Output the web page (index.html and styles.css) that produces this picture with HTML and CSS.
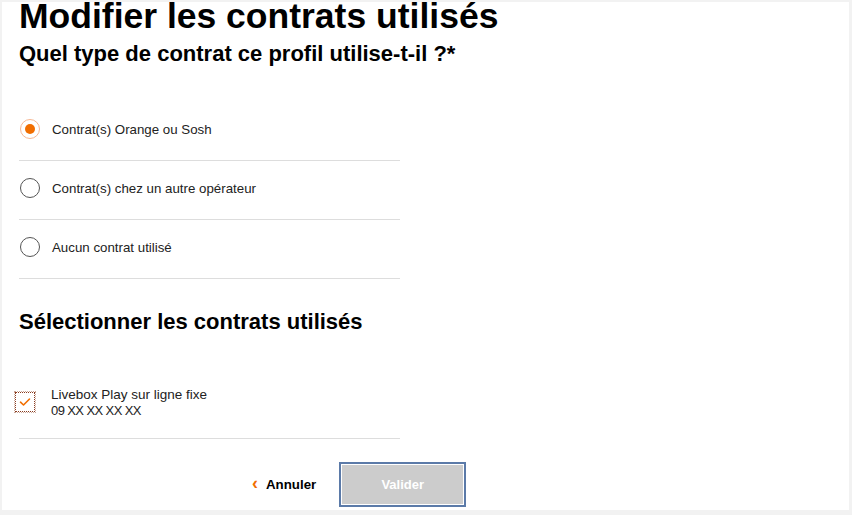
FILE: index.html
```html
<!DOCTYPE html>
<html lang="fr">
<head>
<meta charset="utf-8">
<link rel="stylesheet" href="styles.css">
</head>
<body>
<div class="panel">
  <h1 class="title">Modifier les contrats utilisés</h1>
  <h2 class="subtitle">Quel type de contrat ce profil utilise-t-il ?*</h2>
  <div class="options">
    <div class="row">
      <span class="radio checked"><span class="dot"></span></span>
      <span class="label">Contrat(s) Orange ou Sosh</span>
    </div>
    <div class="row">
      <span class="radio"></span>
      <span class="label">Contrat(s) chez un autre opérateur</span>
    </div>
    <div class="row">
      <span class="radio"></span>
      <span class="label">Aucun contrat utilisé</span>
    </div>
  </div>
  <h2 class="section">Sélectionner les contrats utilisés</h2>
  <div class="contract">
    <span class="checkbox">
      <svg width="12" height="10" viewBox="0 0 12 10"><path d="M1.5 5.2 L4.5 8 L10.5 2" fill="none" stroke="#f16e00" stroke-width="1.6" stroke-linecap="round" stroke-linejoin="round"/></svg>
    </span>
    <div class="ctext">
      <div class="cname">Livebox Play sur ligne fixe</div>
      <div class="cnum">09 XX XX XX XX</div>
    </div>
  </div>
  <div class="actions">
    <span class="cancel"><span class="chev">‹</span>Annuler</span>
    <span class="validate">Valider</span>
  </div>
</div>
</body>
</html>
```
FILE: styles.css
```css
html, body {
  margin: 0;
  padding: 0;
  background: #f2f2f2;
}
body {
  font-family: "Liberation Sans", Arial, sans-serif;
  color: #000;
  padding: 2px 3px 4px 2px;
  height: 515px;
  box-sizing: border-box;
  overflow: hidden;
}
.panel {
  background: #fff;
  height: 508px;
  padding: 0 0 0 17px;
  box-sizing: border-box;
}
.title {
  margin: 0;
  font-size: 35.5px;
  line-height: 28px;
  font-weight: bold;
}
.subtitle {
  margin: 12px 0 0;
  font-size: 22px;
  line-height: 24px;
  font-weight: bold;
}
.options {
  margin-top: 36px;
  width: 381px;
}
.row {
  display: flex;
  align-items: center;
  height: 58px;
  padding-bottom: 4px;
  box-sizing: border-box;
  height: 59px;
  border-bottom: 1px solid #ddd;
}
.radio {
  width: 18px;
  height: 18px;
  border: 1.5px solid #555;
  border-radius: 50%;
  margin-left: 1px;
  display: flex;
  align-items: center;
  justify-content: center;
  box-sizing: content-box;
}
.radio.checked {
  border-color: #f6b894;
}
.dot {
  width: 10px;
  height: 10px;
  border-radius: 50%;
  background: #f16e00;
}
.label {
  margin-left: 12px;
  font-size: 13.3px;
  color: #222;
}
.section {
  margin: 31px 0 0;
  font-size: 22px;
  line-height: 24px;
  font-weight: bold;
}
.contract {
  margin-top: 55px;
  width: 381px;
  display: flex;
  align-items: flex-start;
  border-bottom: 1px solid #ddd;
  height: 50px;
  box-sizing: border-box;
  padding-top: 3px;
}
.checkbox {
  width: 18px;
  height: 18px;
  border: 1px dotted #8a3a1e;
  margin-left: -4px;
  display: flex;
  align-items: center;
  justify-content: center;
  outline: 1px dotted #c9a89a;
}
.ctext {
  margin-left: 16px;
  margin-top: -5px;
  font-size: 13.5px;
  line-height: 16px;
  color: #222;
}
.cnum {
  font-size: 13px;
  letter-spacing: -0.6px;
}
.actions {
  display: flex;
  align-items: center;
  margin-top: 23px;
  padding-left: 233px;
}
.cancel {
  display: flex;
  align-items: center;
  font-size: 13.3px;
  font-weight: bold;
  color: #000;
}
.chev {
  color: #f16e00;
  font-size: 18px;
  font-weight: bold;
  margin-right: 8px;
  line-height: 13px;
  margin-top: -3px;
}
.validate {
  margin-left: 23px;
  width: 123px;
  height: 41px;
  flex-shrink: 0;
  display: flex;
  align-items: center;
  justify-content: center;
  background: #ccc;
  color: #fff;
  font-size: 13px;
  font-weight: bold;
  border: 2px solid #5b7aa8;
  box-shadow: inset 0 0 0 1px #fff;
}
```
